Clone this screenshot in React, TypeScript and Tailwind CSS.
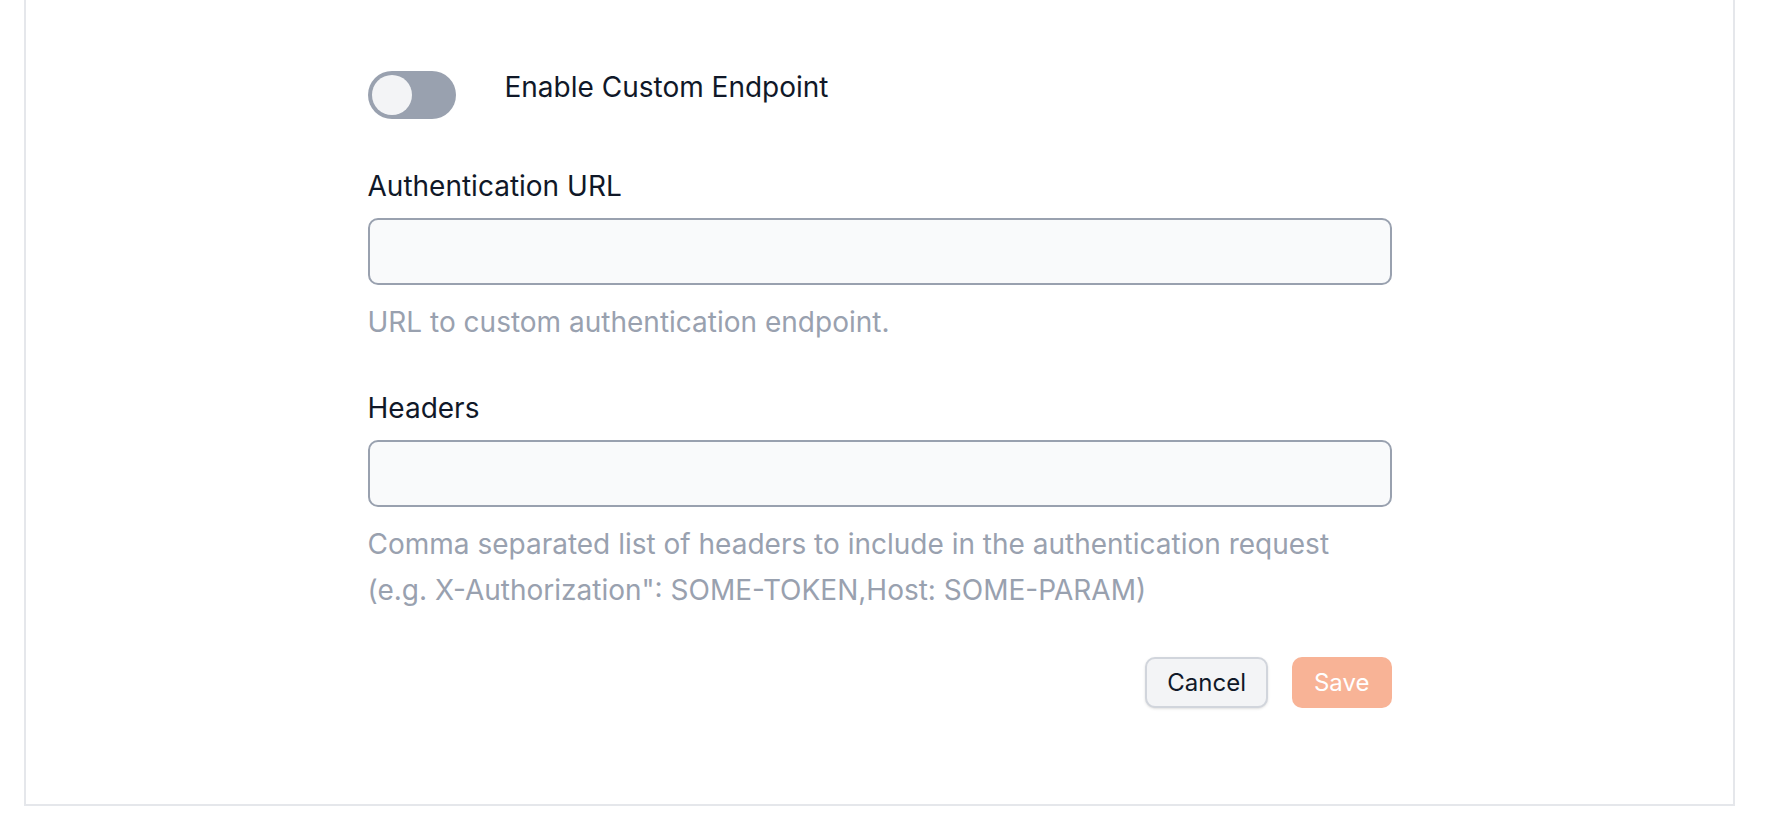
import { useState } from "react";

type FieldProps = {
  label: string;
  helper: React.ReactNode;
  value: string;
  onChange: (value: string) => void;
};

function Field({ label, helper, value, onChange }: FieldProps) {
  return (
    <div className="flex flex-col">
      <label className="text-[28px] leading-[40px] text-gray-900">{label}</label>
      <input
        value={value}
        onChange={(e) => onChange(e.target.value)}
        className="mt-[12px] h-[67px] w-full rounded-[10px] border-2 border-gray-400 bg-gray-50 px-4 text-[28px] text-gray-900 outline-none"
      />
      <p className="mt-[14px] text-[28px] leading-[46px] text-gray-400">{helper}</p>
    </div>
  );
}

export default function App() {
  const [enabled, setEnabled] = useState(false);
  const [authUrl, setAuthUrl] = useState("");
  const [headers, setHeaders] = useState("");

  return (
    <div className="min-h-screen bg-white pl-[24px] pr-[51px] font-['Inter',sans-serif]">
      <div className="border-x-2 border-b-2 border-[#e5e7eb] bg-white pb-[96px] pt-[71px]">
        <div className="mx-auto flex w-[1024px] flex-col">
          <div className="flex items-start gap-[49px]">
            <button
              type="button"
              onClick={() => setEnabled(!enabled)}
              className={`flex h-[48px] w-[88px] shrink-0 items-center rounded-full p-[4px] ${
                enabled ? "justify-end bg-orange-400" : "justify-start bg-gray-400"
              }`}
            >
              <span className="h-[40px] w-[40px] rounded-full bg-gray-100" />
            </button>
            <span className="text-[28px] leading-[32px] text-gray-900">Enable Custom Endpoint</span>
          </div>

          <div className="mt-[47px]">
            <Field
              label="Authentication URL"
              helper="URL to custom authentication endpoint."
              value={authUrl}
              onChange={setAuthUrl}
            />
          </div>

          <div className="mt-[43px]">
            <Field
              label="Headers"
              helper={
                <>
                  Comma separated list of headers to include in the authentication request
                  <br />
                  (e.g. X-Authorization": SOME-TOKEN,Host: SOME-PARAM)
                </>
              }
              value={headers}
              onChange={setHeaders}
            />
          </div>

          <div className="mt-[44px] flex justify-end gap-[24px]">
            <button
              type="button"
              className="h-[51px] rounded-[10px] border-2 border-gray-300 bg-gray-100 px-[20px] text-[24px] text-gray-900 shadow-sm"
            >
              Cancel
            </button>
            <button
              type="button"
              className="h-[51px] rounded-[10px] bg-[#f8b396] px-[22px] text-[24px] text-white"
            >
              Save
            </button>
          </div>
        </div>
      </div>
    </div>
  );
}
